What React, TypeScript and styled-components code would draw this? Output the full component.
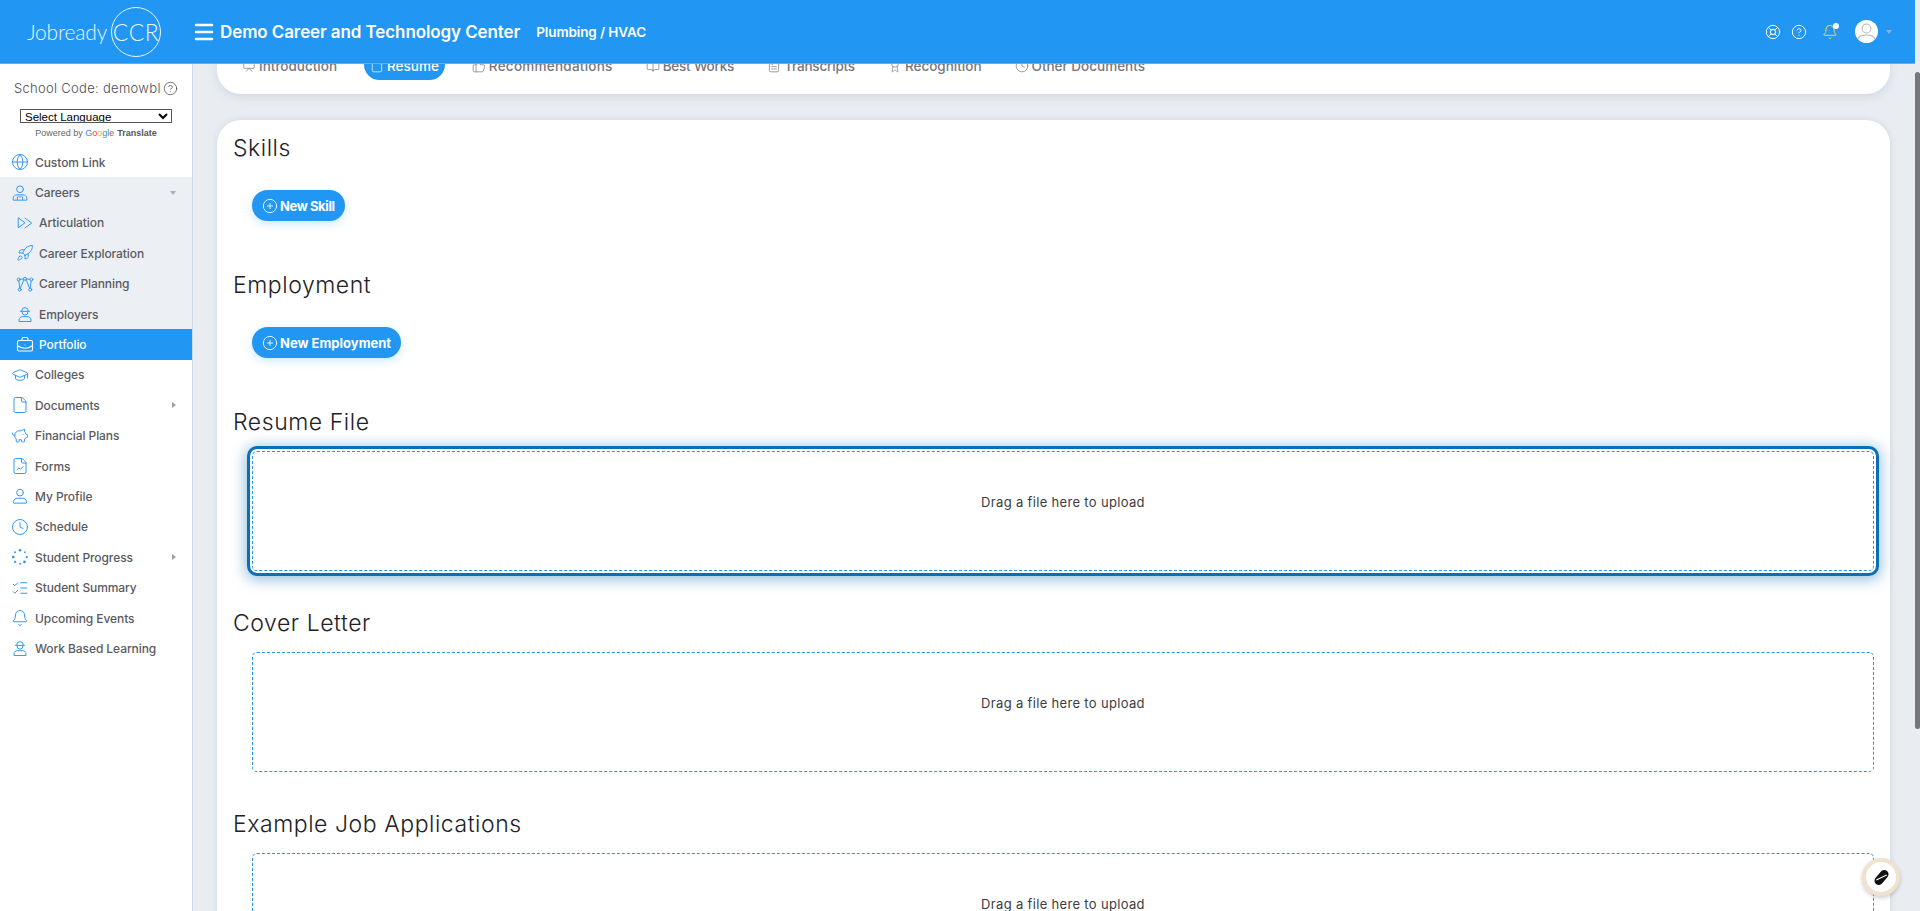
import React, { useLayoutEffect, useRef } from 'react';
import styled, { createGlobalStyle } from 'styled-components';
import {
  Award, BookOpen, BriefcaseBusiness, Bell, CircleHelp, CirclePlus, Clock, File, FileChartLine,
  FileText, Globe, GraduationCap, LifeBuoy, ListChecks, Menu, PiggyBank, Presentation, Rocket, ThumbsUp,
} from 'lucide-react';

const GlobalStyle = createGlobalStyle`
  html, body { margin: 0; padding: 0; height: 100%; overflow: hidden; }
  body { font-family: Inter, "Noto Sans", sans-serif; background: #e9edf2; }
  #root { height: 100%; }
`;

const Frame = styled.div`
  display: flex;
  height: 100vh;
  background: #e9edf2;
`;

const Scroller = styled.div`
  flex: 1;
  min-width: 0;
  overflow-y: scroll;
  scrollbar-width: none;
`;

const ScrollRail = styled.div`
  width: 5px;
  flex: none;
  padding-top: 72px;
`;

const ScrollThumb = styled.div`
  height: 657px;
  background: #77777b;
  border-radius: 3px;
`;

/* header */
const Header = styled.header`
  position: sticky;
  top: 0;
  z-index: 5;
  height: 64px;
  box-sizing: border-box;
  display: flex;
  align-items: center;
  background: #2196f3;
  color: #fff;
  border-bottom: 1px solid #5cb2f6;
`;

const Logo = styled.div`
  width: 165px;
  margin-left: 27px;
  flex: none;
  display: flex;
  align-items: center;
  font-family: Lato, sans-serif;
  font-weight: 300;
  color: #e9f5fe;
`;

const LogoWord = styled.span`
  width: 84px;
  font-size: 21px;
  letter-spacing: -0.2px;
`;

const LogoRing = styled.span`
  width: 50px;
  height: 50px;
  box-sizing: border-box;
  border: 1.5px solid #e9f5fe;
  border-radius: 50%;
  display: flex;
  align-items: center;
  justify-content: center;
  font-size: 23px;
  letter-spacing: 0.5px;
`;

const MenuBtn = styled.span`
  display: flex;
  margin-right: 4px;
`;

const SchoolName = styled.div`
  font-size: 17px;
  font-weight: 600;
  letter-spacing: -0.1px;
  white-space: nowrap;
`;

const Program = styled.div`
  margin-left: 16px;
  font-size: 13.5px;
  font-weight: 600;
  letter-spacing: -0.1px;
  white-space: nowrap;
`;

const HeaderRight = styled.div`
  margin-left: auto;
  margin-right: 23px;
  display: flex;
  align-items: center;
`;

const TopIcon = styled.span<{ $gap: number }>`
  display: flex;
  position: relative;
  margin-right: ${p => p.$gap}px;
`;

const BellDot = styled.span`
  position: absolute;
  top: -1px;
  right: -1px;
  width: 6px;
  height: 6px;
  border-radius: 50%;
  background: #fff;
`;

const Avatar = styled.span`
  width: 23px;
  height: 23px;
  border-radius: 50%;
  background: #fff;
  display: flex;
  overflow: hidden;
  margin-right: 8px;
`;

const Caret = styled.span`
  width: 0;
  height: 0;
  border-left: 3px solid transparent;
  border-right: 3px solid transparent;
  border-top: 4px solid #a3a6dc;
`;

const Body = styled.div`
  display: flex;
  align-items: flex-start;
`;

/* sidebar */
const Sidebar = styled.aside`
  position: sticky;
  top: 64px;
  width: 193px;
  height: 847px;
  flex: none;
  box-sizing: border-box;
  background: #fff;
  border-right: 1px solid #cfdbe8;
  padding-top: 17px;
`;

const SchoolCode = styled.div`
  display: flex;
  align-items: center;
  padding-left: 14px;
  height: 14px;
  font-size: 13px;
  font-weight: 300;
  color: #4b4b52;
  white-space: nowrap;
  letter-spacing: 0.3px;

  svg { margin-left: 2px; }
`;

const LangSelect = styled.select`
  display: block;
  width: 152px;
  height: 14px;
  margin: 14px 0 0 20px;
  padding: 0;
  box-sizing: border-box;
  border: 1px solid #555;
  background: #fff;
  color: #000;
  font-family: "Liberation Sans", Arial, sans-serif;
  font-size: 11.5px;
  border-radius: 0;
`;

const Powered = styled.div`
  margin-top: 3px;
  height: 14px;
  text-align: center;
  font-family: "Liberation Sans", Arial, sans-serif;
  font-size: 9px;
  line-height: 14px;
  color: #666;
  white-space: nowrap;

  b { font-weight: 700; color: #555; margin-left: 3px; }
`;

const GLetter = styled.span<{ $c: string }>`
  color: ${p => p.$c};
`;

const NavList = styled.nav`
  margin-top: 7px;
`;

const NavGroup = styled.div`
  background: #ecf0f5;
`;

const NavRow = styled.div<{ $child?: boolean; $active?: boolean }>`
  height: 30.4px;
  display: flex;
  align-items: center;
  padding-left: ${p => (p.$child ? 16 : 11)}px;
  padding-right: 16px;
  font-size: 12px;
  font-weight: 500;
  letter-spacing: -0.08px;
  white-space: nowrap;
  color: ${p => (p.$active ? '#fff' : '#5a5a61')};
  background: ${p => (p.$active ? '#2196f3' : 'transparent')};

  & > svg:first-child {
    flex: none;
    width: 18px;
    height: 18px;
    margin-right: ${p => (p.$child ? 5 : 6)}px;
    color: ${p => (p.$active ? '#fff' : '#2f96f2')};
  }
`;

const NavArrow = styled.span<{ $down?: boolean }>`
  margin-left: auto;
  width: 0;
  height: 0;
  ${p => p.$down
    ? 'border-left: 3px solid transparent; border-right: 3px solid transparent; border-top: 4px solid #aab0b8;'
    : 'border-top: 3px solid transparent; border-bottom: 3px solid transparent; border-left: 4px solid #9aa0a8;'}
`;

/* main */
const Main = styled.main`
  flex: 1;
  min-width: 0;
  min-height: 1199px;
  padding: 0 25px 0 24px;
`;

const TabsCard = styled.div`
  background: #fff;
  border-radius: 0 0 24px 24px;
  padding: 85px 19px 14px;
  margin-bottom: 26px;
  box-shadow: 0 3px 10px rgba(90, 110, 135, 0.16);
`;

const Tabs = styled.div`
  display: flex;
  gap: 21px;
`;

const Tab = styled.div<{ $active?: boolean; $track: number }>`
  height: 31px;
  padding: 3px 6px 0;
  box-sizing: border-box;
  display: flex;
  align-items: center;
  gap: 3px;
  border-radius: 16px;
  font-size: 13.5px;
  font-weight: 500;
  letter-spacing: ${p => p.$track}px;
  white-space: nowrap;
  color: ${p => (p.$active ? '#fff' : '#77777c')};
  background: ${p => (p.$active ? '#2196f3' : 'transparent')};
`;

const Card = styled.div`
  background: #fff;
  border-radius: 24px 24px 0 0;
  padding: 13px 0 40px 16px;
  box-shadow: 0 0 6px rgba(90, 110, 135, 0.18);
`;

const Heading = styled.h2`
  margin: 0;
  height: 30px;
  font-size: 23px;
  line-height: 30px;
  font-weight: 300;
  color: #222226;
  letter-spacing: 0.55px;
`;

const AddButton = styled.button<{ $track?: number }>`
  display: flex;
  align-items: center;
  gap: 2px;
  height: 31px;
  margin: 27px 0 49px 19px;
  padding: 0 10px;
  border: 0;
  border-radius: 16px;
  background: #2196f3;
  color: #fff;
  font-family: inherit;
  font-size: 13px;
  font-weight: 700;
  letter-spacing: ${p => p.$track ?? 0}px;
  white-space: nowrap;
  box-shadow: 0 3px 8px rgba(33, 150, 243, 0.22);
`;

const DropZone = styled.div<{ $focused?: boolean }>`
  height: 120px;
  margin: 14px 16px 37px 19px;
  box-sizing: border-box;
  border: 1px dashed #2196f3;
  border-radius: 5px;
  padding-top: 41px;
  text-align: center;
  font-size: 13px;
  line-height: 18px;
  letter-spacing: 0.33px;
  color: #3c3c42;
  ${p => p.$focused && `
    outline: 3px solid #0b6fb3;
    outline-offset: 2px;
    box-shadow: 0 0 0 2px #fff, 0 2px 14px 7px rgba(11, 111, 179, 0.42);
  `}
`;

const Floating = styled.div`
  position: fixed;
  left: 1862px;
  top: 858px;
  width: 30px;
  height: 30px;
  border-radius: 50%;
  background: #fff;
  border: 4px solid #f0e2cd;
  box-shadow: 0 2px 4px rgba(0, 0, 0, 0.2);
  display: flex;
  align-items: center;
  justify-content: center;
  z-index: 6;
`;

/* hand drawn icons */
const Ico: React.FC<{ children: React.ReactNode }> = ({ children }) => (
  <svg viewBox="0 0 24 24" fill="none" stroke="currentColor" strokeWidth="1.3" strokeLinecap="round" strokeLinejoin="round">
    {children}
  </svg>
);

const PersonIcon = () => (
  <Ico>
    <circle cx="12" cy="7.5" r="4.5" />
    <path d="M3.5 21v-1.5c0-3 2.5-4.5 5-4.5h7c2.5 0 5 1.5 5 4.5V21z" />
  </Ico>
);

const CareersIcon = () => (
  <Ico>
    <circle cx="12" cy="7" r="4.5" />
    <path d="M3 21v-2c0-3 2.500-4.500 5-4.500h8c2.500 0 5 1.500 5 4.500v2z" />
    <path d="M8.500 21v-3.500M15.500 21v-3.500M10 16l2 2 2-2" />
  </Ico>
);

const HatPersonIcon = () => (
  <Ico>
    <path d="M7.500 8a4.500 4.500 0 0 1 9 0M6 8.500h12M8 9.500a4 4 0 0 0 8 0" />
    <path d="M4 21.500v-1.500c0-3 2.500-4.500 4.500-4.500h7c2 0 4.500 1.500 4.500 4.500v1.500z" />
  </Ico>
);

const ForwardIcon = () => (
  <Ico>
    <path d="M3 5.500v13l8.500-6.500zM12 5.500l9 6.500-9 6.500" />
  </Ico>
);

const NodesIcon = () => (
  <Ico>
    <circle cx="3.500" cy="6" r="2" />
    <circle cx="12" cy="5" r="2" />
    <circle cx="20.500" cy="6" r="2" />
    <circle cx="5" cy="19.500" r="2" />
    <circle cx="19" cy="19.500" r="2" />
    <path d="M5.500 5.800 10 5.200M14 5.200l4.500.6M3.800 8 5 17.500M20.200 8 19 17.500M10.500 6.500 5.800 17.700M13.500 6.500l4.700 11.200" />
  </Ico>
);

const DotsIcon = () => (
  <svg viewBox="0 0 24 24" fill="currentColor">
    <circle cx="12" cy="3" r="1.800" />
    <circle cx="18.500" cy="5.500" r="1.200" />
    <circle cx="21" cy="12" r="1.500" />
    <circle cx="18" cy="18.500" r="1.800" />
    <circle cx="12" cy="21" r="1.300" />
    <circle cx="5.500" cy="18.500" r="1.500" />
    <circle cx="3" cy="12" r="1.800" />
    <circle cx="5.500" cy="5.500" r="1.300" />
  </svg>
);

const AvatarIcon = () => (
  <svg viewBox="0 0 23 23" width="23" height="23" fill="none" stroke="#b4b8bd" strokeWidth="1.100">
    <circle cx="11.500" cy="8.500" r="4.500" />
    <path d="M2.500 20c1-4 5-5 9-5s8 1 9 5" />
  </svg>
);

const navBefore = [{ icon: <Globe strokeWidth={1.300} />, label: 'Custom Link' }];

const careerChildren = [
  { icon: <ForwardIcon />, label: 'Articulation' },
  { icon: <Rocket strokeWidth={1.300} />, label: 'Career Exploration' },
  { icon: <NodesIcon />, label: 'Career Planning' },
  { icon: <HatPersonIcon />, label: 'Employers' },
];

const navAfter = [
  { icon: <GraduationCap strokeWidth={1.300} />, label: 'Colleges' },
  { icon: <File strokeWidth={1.300} />, label: 'Documents', arrow: true },
  { icon: <PiggyBank strokeWidth={1.300} />, label: 'Financial Plans' },
  { icon: <FileChartLine strokeWidth={1.300} />, label: 'Forms' },
  { icon: <PersonIcon />, label: 'My Profile' },
  { icon: <Clock strokeWidth={1.300} />, label: 'Schedule' },
  { icon: <DotsIcon />, label: 'Student Progress', arrow: true },
  { icon: <ListChecks strokeWidth={1.300} />, label: 'Student Summary' },
  { icon: <Bell strokeWidth={1.300} />, label: 'Upcoming Events' },
  { icon: <HatPersonIcon />, label: 'Work Based Learning' },
];

const tabs = [
  { icon: Presentation, label: 'Introduction', track: 0 },
  { icon: File, label: 'Resume', active: true, track: 0 },
  { icon: ThumbsUp, label: 'Recommendations', track: 0.25 },
  { icon: BookOpen, label: 'Best Works', track: -0.2 },
  { icon: FileText, label: 'Transcripts', track: -0.2 },
  { icon: Award, label: 'Recognition', track: 0 },
  { icon: Clock, label: 'Other Documents', track: 0 },
];

const App: React.FC = () => {
  const scroller = useRef<HTMLDivElement>(null);

  useLayoutEffect(() => {
    if (scroller.current) scroller.current.scrollTop = 100;
  }, []);

  return (
    <Frame>
      <GlobalStyle />
      <Scroller ref={scroller}>
        <Header>
          <Logo>
            <LogoWord>Jobready</LogoWord>
            <LogoRing>CCR</LogoRing>
          </Logo>
          <MenuBtn><Menu size={24} strokeWidth={2.500} /></MenuBtn>
          <SchoolName>Demo Career and Technology Center</SchoolName>
          <Program>Plumbing / HVAC</Program>
          <HeaderRight>
            <TopIcon $gap={10}><LifeBuoy size={16} strokeWidth={1.500} /></TopIcon>
            <TopIcon $gap={15}><CircleHelp size={16} strokeWidth={1.500} /></TopIcon>
            <TopIcon $gap={17}>
              <Bell size={16} strokeWidth={1.500} color="#f3d65a" />
              <BellDot />
            </TopIcon>
            <Avatar><AvatarIcon /></Avatar>
            <Caret />
          </HeaderRight>
        </Header>
        <Body>
          <Sidebar>
            <SchoolCode>School Code: demowbl<CircleHelp size={15} strokeWidth={1.200} /></SchoolCode>
            <LangSelect defaultValue="">
              <option value="">Select Language</option>
            </LangSelect>
            <Powered>
              Powered by{' '}
              <GLetter $c="#4285f4">G</GLetter><GLetter $c="#ea4335">o</GLetter><GLetter $c="#fbbc05">o</GLetter>
              <GLetter $c="#4285f4">g</GLetter><GLetter $c="#34a853">l</GLetter><GLetter $c="#ea4335">e</GLetter>
              <b>Translate</b>
            </Powered>
            <NavList>
              {navBefore.map(n => <NavRow key={n.label}>{n.icon}{n.label}</NavRow>)}
              <NavGroup>
                <NavRow><CareersIcon />Careers<NavArrow $down /></NavRow>
                {careerChildren.map(n => <NavRow key={n.label} $child>{n.icon}{n.label}</NavRow>)}
              </NavGroup>
              <NavRow $child $active><BriefcaseBusiness strokeWidth={1.500} />Portfolio</NavRow>
              {navAfter.map(n => (
                <NavRow key={n.label}>{n.icon}{n.label}{n.arrow && <NavArrow />}</NavRow>
              ))}
            </NavList>
          </Sidebar>
          <Main>
            <TabsCard>
              <Tabs>
                {tabs.map(t => (
                  <Tab key={t.label} $active={t.active} $track={t.track}>
                    <t.icon size={14} strokeWidth={1.200} />
                    {t.label}
                  </Tab>
                ))}
              </Tabs>
            </TabsCard>
            <Card>
              <Heading>Skills</Heading>
              <AddButton $track={-0.4}><CirclePlus size={16} strokeWidth={1.300} />New Skill</AddButton>
              <Heading>Employment</Heading>
              <AddButton><CirclePlus size={16} strokeWidth={1.300} />New Employment</AddButton>
              <Heading>Resume File</Heading>
              <DropZone $focused>Drag a file here to upload</DropZone>
              <Heading>Cover Letter</Heading>
              <DropZone>Drag a file here to upload</DropZone>
              <Heading>Example Job Applications</Heading>
              <DropZone>Drag a file here to upload</DropZone>
            </Card>
          </Main>
        </Body>
      </Scroller>
      <ScrollRail><ScrollThumb /></ScrollRail>
      <Floating>
        <svg viewBox="0 0 20 20" width="19" height="19">
          <g transform="rotate(40 10 10)">
            <rect x="5.500" y="1" width="9" height="18" rx="4.500" fill="#111" />
            <path d="M7.500 15.500 12.500 4.500" stroke="#fff" strokeWidth="1.300" />
          </g>
        </svg>
      </Floating>
    </Frame>
  );
};

export default App;
